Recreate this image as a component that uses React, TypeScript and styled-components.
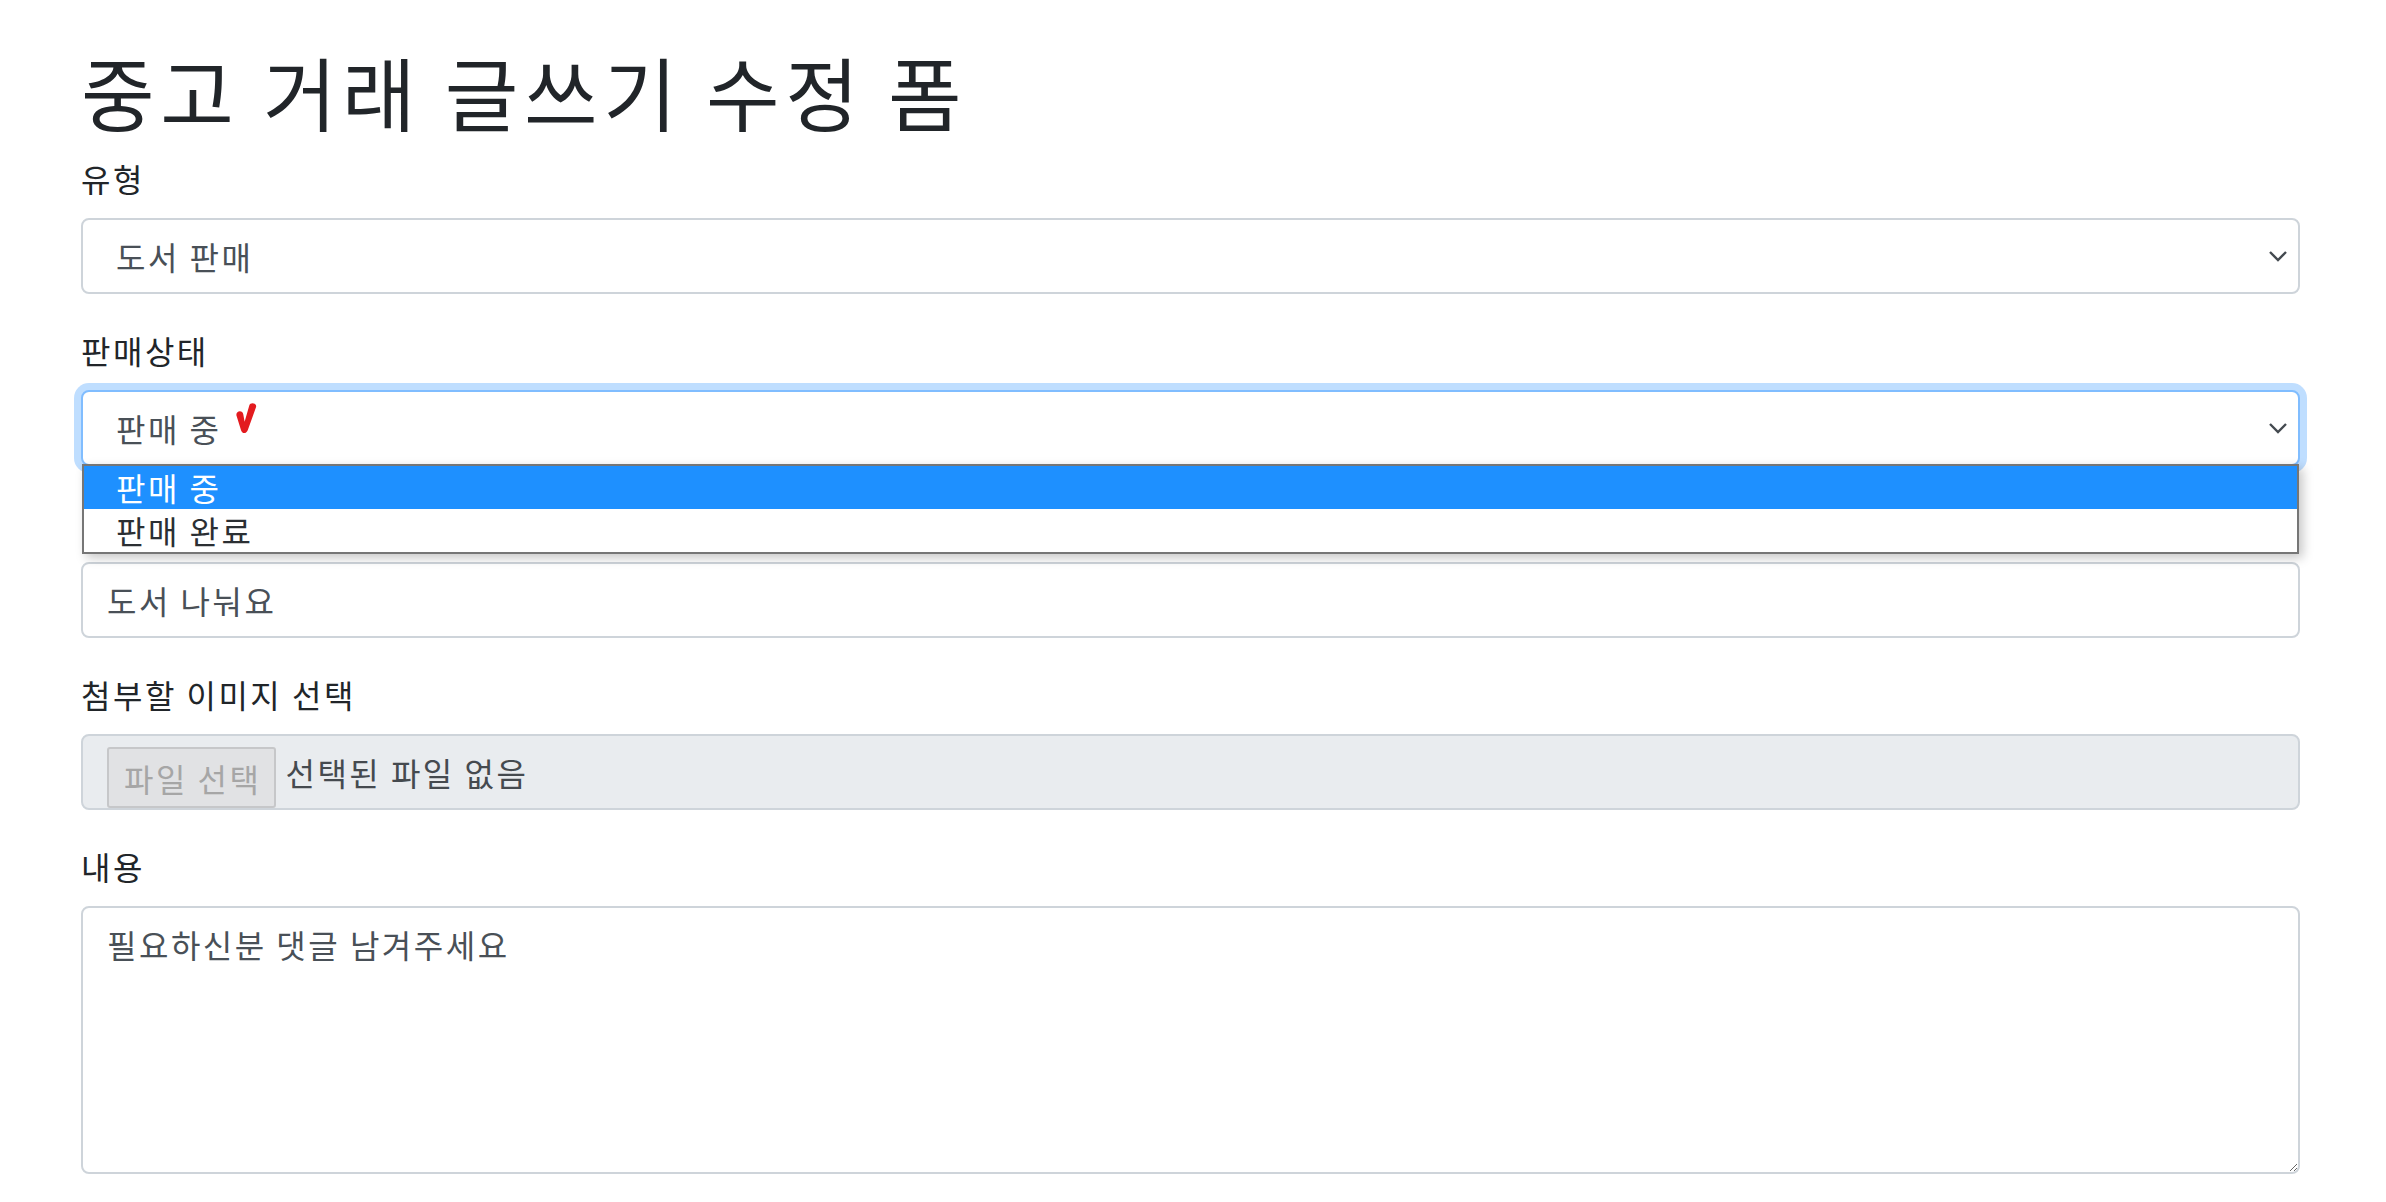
import React from "react";
import styled, { createGlobalStyle, css } from "styled-components";

const GlobalStyle = createGlobalStyle`
  html, body { margin: 0; padding: 0; background: #ffffff; }
  body {
    font-family: "Noto Sans CJK KR", "Noto Sans", sans-serif;
    color: #212529;
    letter-spacing: 2.5px;
  }
  * { box-sizing: border-box; }
`;

const Container = styled.div`
  width: 2219px;
  margin-left: 81px;
  padding-top: 42px;
`;

const Title = styled.h1`
  margin: 0 0 16px;
  font-size: 80px;
  line-height: 96px;
  font-weight: 400;
  letter-spacing: 5.6px;
  color: #212529;
`;

const FormGroup = styled.div`
  margin-bottom: 32px;
`;

const Label = styled.label<{ $occluded?: boolean }>`
  display: block;
  font-size: 32px;
  line-height: 48px;
  margin-bottom: 16px;
  color: #212529;
  visibility: ${(p) => (p.$occluded ? "hidden" : "visible")};
`;

const fieldBase = css`
  width: 100%;
  height: 76px;
  border: 2px solid #ced4da;
  border-radius: 8px;
  font-family: "Noto Sans CJK KR", "Noto Sans", sans-serif;
  font-size: 32px;
  letter-spacing: 2.5px;
  color: #495057;
  background: #ffffff;
`;

const SelectWrap = styled.div`
  position: relative;
`;

const SelectBox = styled.div<{ $focused?: boolean }>`
  ${fieldBase};
  display: flex;
  align-items: center;
  justify-content: space-between;
  padding: 0 10px 0 33px;
  ${(p) =>
    p.$focused &&
    css`
      border-color: #80bdff;
      box-shadow: 0 0 0 7px rgba(0, 123, 255, 0.25);
    `}
`;

const SelectValue = styled.span`
  display: flex;
  align-items: center;
  line-height: 48px;
`;

const CheckMark = styled.svg`
  margin-left: 13px;
  margin-top: -20px;
`;

const Listbox = styled.ul`
  position: absolute;
  top: calc(100% - 2px);
  left: 1px;
  right: 1px;
  margin: 0;
  padding: 0;
  list-style: none;
  background: #ffffff;
  border: 2px solid #767676;
  box-shadow: 4px 4px 10px rgba(0, 0, 0, 0.22);
  z-index: 10;
`;

const Option = styled.li<{ $active?: boolean }>`
  height: 43px;
  line-height: 43px;
  padding-left: 32px;
  font-size: 32px;
  color: ${(p) => (p.$active ? "#ffffff" : "#2b2f33")};
  background: ${(p) => (p.$active ? "#1e90ff" : "#ffffff")};
`;

const TextInput = styled.input`
  ${fieldBase};
  display: block;
  padding: 0 24px;
  outline: none;
`;

const FileField = styled.div`
  ${fieldBase};
  display: flex;
  align-items: stretch;
  gap: 9px;
  padding: 11px 24px 0;
  background: #e9ecef;
`;

const FileButton = styled.span`
  display: flex;
  align-items: center;
  padding: 0 13px 0 15px;
  background: #e1e2e4;
  border: 2px solid #c6c7c9;
  border-radius: 3px;
  color: #a6a6a6;
  font-size: 32px;
`;

const FileName = styled.span`
  display: flex;
  align-items: center;
  padding-bottom: 11px;
  color: #454a4f;
  font-size: 32px;
`;

const TextArea = styled.textarea`
  ${fieldBase};
  display: block;
  height: 268px;
  padding: 12px 24px;
  line-height: 48px;
  resize: vertical;
  outline: none;
`;

const Chevron = () => (
  <svg width="20" height="12" viewBox="0 0 20 12" fill="none">
    <path d="M2 2 L10 10 L18 2" stroke="#444a50" strokeWidth="2.4" />
  </svg>
);

export default function App() {
  return (
    <>
      <GlobalStyle />
      <Container>
        <Title>중고 거래 글쓰기 수정 폼</Title>

        <FormGroup>
          <Label>유형</Label>
          <SelectWrap>
            <SelectBox>
              <SelectValue>도서 판매</SelectValue>
              <Chevron />
            </SelectBox>
          </SelectWrap>
        </FormGroup>

        <FormGroup>
          <Label>판매상태</Label>
          <SelectWrap>
            <SelectBox $focused>
              <SelectValue>
                판매 중
                <CheckMark width="22" height="36" viewBox="0 0 24 34">
                  <path
                    d="M1.5 14 C1 8.5 8.5 8 9 13 L10.5 21 L15.5 3.5 C16.5 -0.5 24 0.5 23 5 L14 30 C12.5 34.5 7.5 34.5 6.5 30 Z"
                    fill="#e31b1f"
                  />
                </CheckMark>
              </SelectValue>
              <Chevron />
            </SelectBox>
            <Listbox>
              <Option $active>판매 중</Option>
              <Option>판매 완료</Option>
            </Listbox>
          </SelectWrap>
        </FormGroup>

        <FormGroup>
          <Label $occluded>제목</Label>
          <TextInput defaultValue="도서 나눠요" />
        </FormGroup>

        <FormGroup>
          <Label>첨부할 이미지 선택</Label>
          <FileField>
            <FileButton>파일 선택</FileButton>
            <FileName>선택된 파일 없음</FileName>
          </FileField>
        </FormGroup>

        <FormGroup>
          <Label>내용</Label>
          <TextArea rows={5} defaultValue="필요하신분 댓글 남겨주세요" />
        </FormGroup>
      </Container>
    </>
  );
}
